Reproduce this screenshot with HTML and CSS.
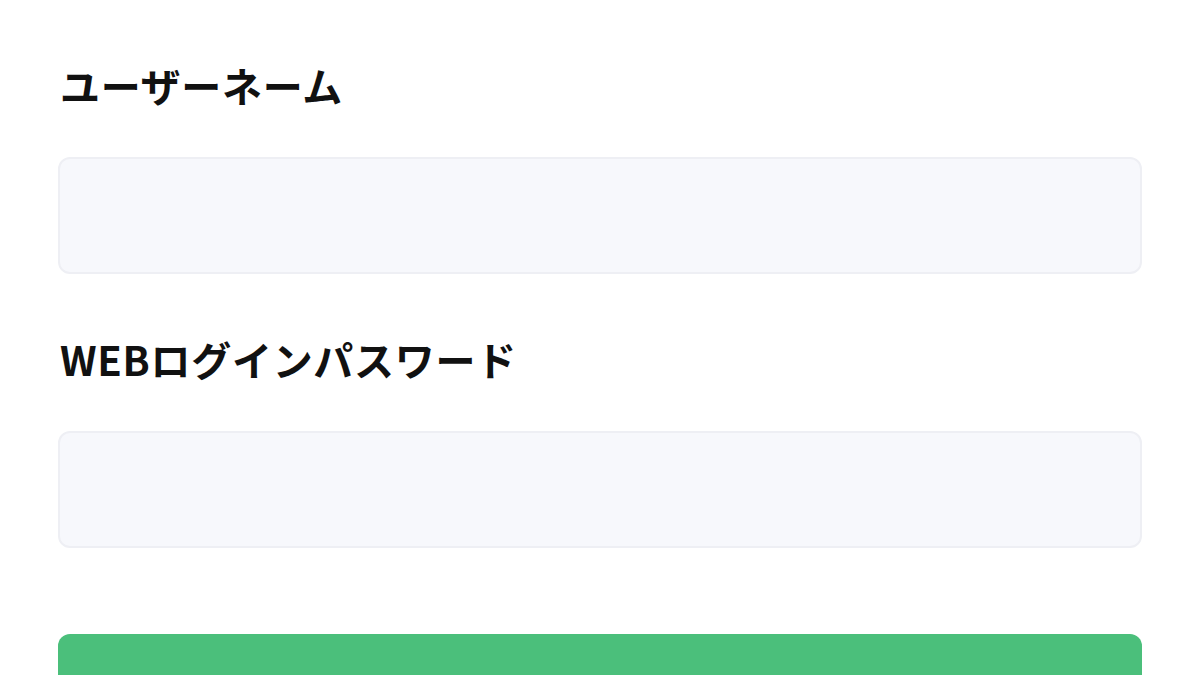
FILE: index.html
```html
<!DOCTYPE html>
<html lang="ja">
<head>
<meta charset="utf-8">
<link rel="stylesheet" href="styles.css">
</head>
<body>
<form class="form">
  <div class="field">
    <label class="label" for="user">ユーザーネーム</label>
    <input class="input" id="user" type="text">
  </div>
  <div class="field field-second">
    <label class="label" for="pass">WEBログインパスワード</label>
    <input class="input" id="pass" type="password">
  </div>
  <button class="submit" type="button"></button>
</form>
</body>
</html>
```
FILE: styles.css
```css
html, body {
  margin: 0;
  padding: 0;
  background: #ffffff;
  width: 1200px;
  height: 675px;
  overflow: hidden;
}
body {
  font-family: "Noto Sans CJK JP", "Noto Sans", sans-serif;
  color: #111111;
}
.form {
  display: flex;
  flex-direction: column;
  padding: 61px 58px 0 58px;
}
.field {
  display: flex;
  flex-direction: column;
}
.field-second {
  margin-top: 61px;
}
.label {
  font-size: 40px;
  font-weight: 700;
  line-height: 48px;
  margin: 0 0 48px 2px;
  letter-spacing: 0.7px;
}
.input {
  box-sizing: border-box;
  height: 117px;
  width: 100%;
  margin: 0;
  border: 2px solid #eeeff4;
  border-radius: 12px;
  background: #f7f8fc;
  outline: none;
}
.submit {
  margin-top: 86px;
  height: 116px;
  width: 100%;
  border: none;
  border-radius: 12px;
  background: #4bbf7b;
}
```
